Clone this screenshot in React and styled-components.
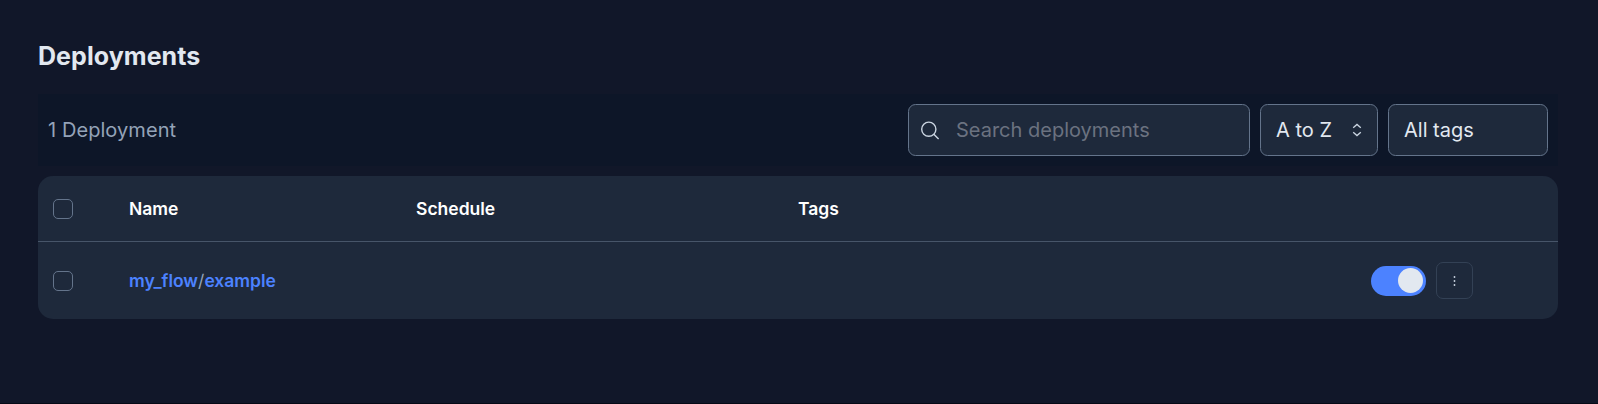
import React, { useState } from "react";
import styled, { createGlobalStyle } from "styled-components";

const Global = createGlobalStyle`
  *, *::before, *::after { box-sizing: border-box; }
  body {
    margin: 0;
    background: #111729;
    color: #e2e8f0;
    font-family: Inter, sans-serif;
    font-size: 20px;
  }
  button, input { font: inherit; color: inherit; margin: 0; }
`;

const Page = styled.main`
  height: 404px;
  padding: 38px 40px 0 38px;
  border-bottom: 1px solid #060a16;
`;

const Title = styled.h1`
  margin: 0;
  height: 36px;
  font-size: 25px;
  line-height: 37px;
  font-weight: 700;
  letter-spacing: 0.06px;
`;

const Toolbar = styled.div`
  display: flex;
  align-items: center;
  gap: 10px;
  height: 72px;
  margin: 20px 0 10px;
  padding: 0 10px;
  background: #0d1628;
`;

const Count = styled.span`
  margin-right: auto;
  color: #94a3b8;
  letter-spacing: 0.07px;
`;

const Field = styled.div`
  display: flex;
  align-items: center;
  width: ${(p) => p.$width}px;
  height: 52px;
  padding: 0 ${(p) => p.$padding ?? 15}px;
  border: 1px solid #64748b;
  border-radius: 7.5px;
  background: #1e293b;
`;

const SearchInput = styled.input`
  flex: 1;
  min-width: 0;
  padding: 0;
  border: 0;
  outline: 0;
  background: transparent;
  &::placeholder { color: #6b7280; opacity: 1; }
`;

const SearchIcon = styled.svg`
  width: 20px;
  height: 20px;
  margin-right: 16px;
`;

const ChevronIcon = styled.svg`
  width: 10px;
  height: 14px;
  margin-left: auto;
`;

const Table = styled.div`
  border-radius: 15px;
  background: #1e293b;
`;

const Row = styled.div`
  display: grid;
  grid-template-columns: 76px 287px 382px 573px 1fr;
  align-items: center;
  height: ${(p) => p.$height}px;
  padding-left: 15px;
  font-size: 17.5px;
  font-weight: 600;
  & + & { border-top: 1px solid #475569; }
`;

const Heading = styled.span`
  color: #fff;
`;

const Checkbox = styled.input.attrs({ type: "checkbox" })`
  appearance: none;
  width: 20px;
  height: 20px;
  border: 1px solid #64748b;
  border-radius: 5px;
`;

const Name = styled.span`
  color: #94a3b8;
  font-weight: 400;
`;

const Link = styled.a`
  color: #4c82ff;
  font-weight: 600;
`;

const Actions = styled.div`
  display: flex;
  align-items: center;
  gap: 10px;
  grid-column: 5;
`;

const Toggle = styled.button`
  display: flex;
  justify-content: ${(p) => (p.$on ? "flex-end" : "flex-start")};
  width: 55px;
  height: 30px;
  padding: 2px 3px;
  border: 0;
  border-radius: 15px;
  background: ${(p) => (p.$on ? "#4c82ff" : "#475569")};
`;

const Knob = styled.span`
  width: 25px;
  height: 25px;
  border-radius: 50%;
  background: #e2e8f0;
`;

const MenuButton = styled.button`
  display: grid;
  place-items: center;
  width: 37px;
  height: 37px;
  padding: 0;
  border: 1px solid #334155;
  border-radius: 7px;
  background: transparent;
`;

export default function App() {
  const [active, setActive] = useState(true);
  return (
    <>
      <Global />
      <Page>
        <Title>Deployments</Title>
        <Toolbar>
          <Count>1 Deployment</Count>
          <Field $width={342} $padding={11}>
            <SearchIcon viewBox="0 0 20 20" fill="none" stroke="#cbd5e1" strokeWidth="1.4">
              <circle cx="8.8" cy="9.2" r="7.1" />
              <path d="M13.8 14.2l4.8 4.8" />
            </SearchIcon>
            <SearchInput placeholder="Search deployments" />
          </Field>
          <Field $width={118}>
            A to Z
            <ChevronIcon viewBox="0 0 10 14" fill="none" stroke="#cbd5e1" strokeWidth="1.3">
              <path d="M1.2 4.8L5 1.4l3.8 3.4M1.2 9.2L5 12.6l3.8-3.4" />
            </ChevronIcon>
          </Field>
          <Field $width={160}>All tags</Field>
        </Toolbar>
        <Table>
          <Row $height={65}>
            <Checkbox aria-label="Select all" />
            <Heading>Name</Heading>
            <Heading>Schedule</Heading>
            <Heading>Tags</Heading>
          </Row>
          <Row $height={78}>
            <Checkbox aria-label="Select deployment" />
            <Name><Link>my_flow</Link>/<Link>example</Link></Name>
            <Actions>
              <Toggle $on={active} onClick={() => setActive(!active)} aria-label="Active"><Knob /></Toggle>
              <MenuButton aria-label="More">
                <svg width="4" height="12" viewBox="0 0 4 12" fill="#cbd5e1">
                  <circle cx="1.5" cy="2" r="0.9" />
                  <circle cx="1.5" cy="6" r="0.9" />
                  <circle cx="1.5" cy="10" r="0.9" />
                </svg>
              </MenuButton>
            </Actions>
          </Row>
        </Table>
      </Page>
    </>
  );
}
